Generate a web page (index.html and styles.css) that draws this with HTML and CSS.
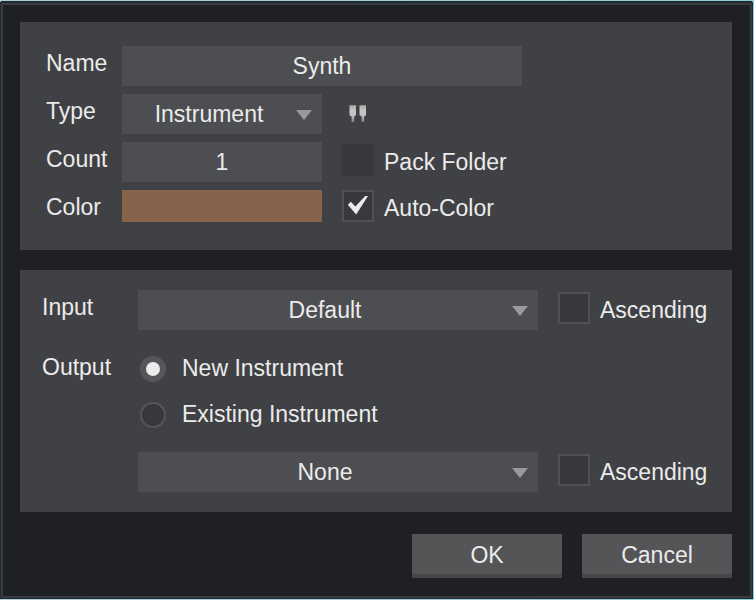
FILE: index.html
```html
<!DOCTYPE html>
<html lang="en">
<head>
<meta charset="utf-8">
<title>Add Tracks</title>
<link rel="stylesheet" href="styles.css">
</head>
<body>
<form class="dialog">
  <section class="panel track">
    <label class="name" for="name">Name</label>
    <input class="field wide" id="name" type="text" value="Synth">

    <label class="name" for="type">Type</label>
    <div class="drop">
      <select class="field" id="type"><option>Instrument</option><option>Audio</option></select>
      <svg class="arrow" viewBox="0 0 16 10" aria-hidden="true"><path d="M0 0H16L8 10Z"/></svg>
    </div>
    <div class="side">
      <svg class="keys" viewBox="0 0 32 32" aria-hidden="true">
        <defs><linearGradient id="shade" x1="0" y1="0" x2="0" y2="1"><stop offset="0" stop-color="#a9aaab"/><stop offset=".3" stop-color="#c6c6c7"/><stop offset=".6" stop-color="#c2c2c3"/><stop offset="1" stop-color="#7f8082"/></linearGradient></defs>
        <path fill="url(#shade)" d="M7.5 7.3H14V17.3L12.2 18.5V24H9.6V18.5L7.5 17.3ZM17.5 7.3H24V17.3L22.2 18.5V24H19.6V18.5L17.5 17.3Z"/>
      </svg>
    </div>

    <label class="name" for="count">Count</label>
    <input class="field" id="count" type="text" inputmode="numeric" value="1">
    <div class="side">
      <label class="check"><input type="checkbox" disabled>Pack Folder</label>
    </div>

    <label class="name" for="color">Color</label>
    <input class="swatch" id="color" type="color" value="#87634c">
    <div class="side top">
      <label class="check"><input type="checkbox" checked>Auto-Color</label>
    </div>
  </section>

  <section class="panel routing">
    <label class="name" for="input">Input</label>
    <div class="drop">
      <select class="field" id="input"><option>Default</option></select>
      <svg class="arrow" viewBox="0 0 16 10" aria-hidden="true"><path d="M0 0H16L8 10Z"/></svg>
    </div>
    <div class="side">
      <label class="check"><input type="checkbox">Ascending</label>
    </div>

    <span class="name" id="output">Output</span>
    <div class="radios" role="radiogroup" aria-labelledby="output">
      <label class="radio"><input type="radio" name="output" checked>New Instrument</label>
      <label class="radio"><input type="radio" name="output">Existing Instrument</label>
    </div>

    <div class="drop existing">
      <select class="field" aria-labelledby="output"><option>None</option></select>
      <svg class="arrow" viewBox="0 0 16 10" aria-hidden="true"><path d="M0 0H16L8 10Z"/></svg>
    </div>
    <div class="side">
      <label class="check"><input type="checkbox">Ascending</label>
    </div>
  </section>

  <footer class="actions">
    <button type="button">OK</button>
    <button type="button">Cancel</button>
  </footer>
</form>
</body>
</html>
```
FILE: styles.css
```css
* {
  box-sizing: border-box;
}

body {
  margin: 0;
  min-height: 100vh;
  display: flex;
  padding: 1px 1px 1px 0;
  background: linear-gradient(90deg, #b4cbdb, #8fcbd6);
  font: 23px/36px "Liberation Sans", Arial, sans-serif;
  color: #ebebeb;
}

.dialog {
  flex: 1;
  display: flex;
  flex-direction: column;
  gap: 20px;
  margin: 2px 1px 1px 1px;
  padding: 17px 18px 18px 17px;
  background: #1f2023;
  border: 2px solid #383b41;
  border-right-color: #2c3c45;
  outline: 1px solid #1e2b30;
  box-shadow: 0 -2px #1e2b30;
}

.panel {
  display: grid;
  align-items: center;
  background: #404144;
}

.track {
  grid-template-columns: 76px minmax(0, 1fr) minmax(0, 1fr);
  row-gap: 8px;
  padding: 24px 210px 26px 26px;
}

.routing {
  grid-template-columns: 96px minmax(0, 1fr) 168px;
  row-gap: 20px;
  padding: 20px 26px 20px 22px;
}

.name {
  align-self: start;
  line-height: 34px;
}

.field {
  display: block;
  width: 100%;
  height: 40px;
  margin: 0;
  padding: 0;
  border: 0;
  border-radius: 0;
  background: #4d4e51;
  color: inherit;
  font: inherit;
  text-align: center;
}

.wide {
  grid-column: 2 / 4;
}

.drop {
  position: relative;
}

select.field {
  appearance: none;
  padding-right: 26px;
  text-align-last: center;
}

.arrow {
  position: absolute;
  right: 10px;
  top: 16px;
  width: 16px;
  height: 10px;
  fill: #98999b;
  pointer-events: none;
}

.side {
  padding-left: 20px;
}

.top {
  align-self: start;
  height: 32px;
}

.keys {
  display: block;
  width: 32px;
  height: 32px;
}

.swatch {
  appearance: none;
  align-self: start;
  width: 100%;
  height: 32px;
  padding: 0;
  border: 0;
  background: none;
}

.swatch::-webkit-color-swatch-wrapper {
  padding: 0;
}

.swatch::-webkit-color-swatch {
  border: 0;
  border-radius: 0;
}

.check,
.radio {
  display: flex;
  align-items: flex-start;
  white-space: nowrap;
}

.check {
  gap: 10px;
}

.check input {
  appearance: none;
  flex: none;
  width: 32px;
  height: 32px;
  margin: 0;
  border: 2px solid #505154;
  background: #38393c;
}

.check input:disabled {
  border-color: #38393c;
}

.check input:checked {
  background: #38393c url("data:image/svg+xml,%3Csvg xmlns='http://www.w3.org/2000/svg' viewBox='0 0 28 28'%3E%3Cpath fill='%23ebebeb' d='M3.8 12.8L6.8 9.8L11.4 14.6L21.2 4H24L12.2 22.6Z'/%3E%3C/svg%3E") center / 28px 28px no-repeat;
}

.radios {
  grid-column: 2 / 4;
  display: grid;
  gap: 10px;
  padding-left: 2px;
}

.radio {
  gap: 16px;
}

.radio input {
  appearance: none;
  flex: none;
  width: 26px;
  height: 26px;
  margin: 6px 0 0;
  border: 2px solid #55565a;
  border-radius: 50%;
  background: #37383b;
}

.radio input:checked {
  border-width: 6px;
  background: #ebebeb;
}

.existing {
  grid-column: 2;
}

.actions {
  display: flex;
  justify-content: flex-end;
  gap: 20px;
  padding-top: 2px;
}

.actions button {
  width: 150px;
  height: 44px;
  padding: 2px 0 0;
  border: 0;
  border-bottom: 4px solid #464648;
  background: #555557;
  color: inherit;
  font: inherit;
}
```
